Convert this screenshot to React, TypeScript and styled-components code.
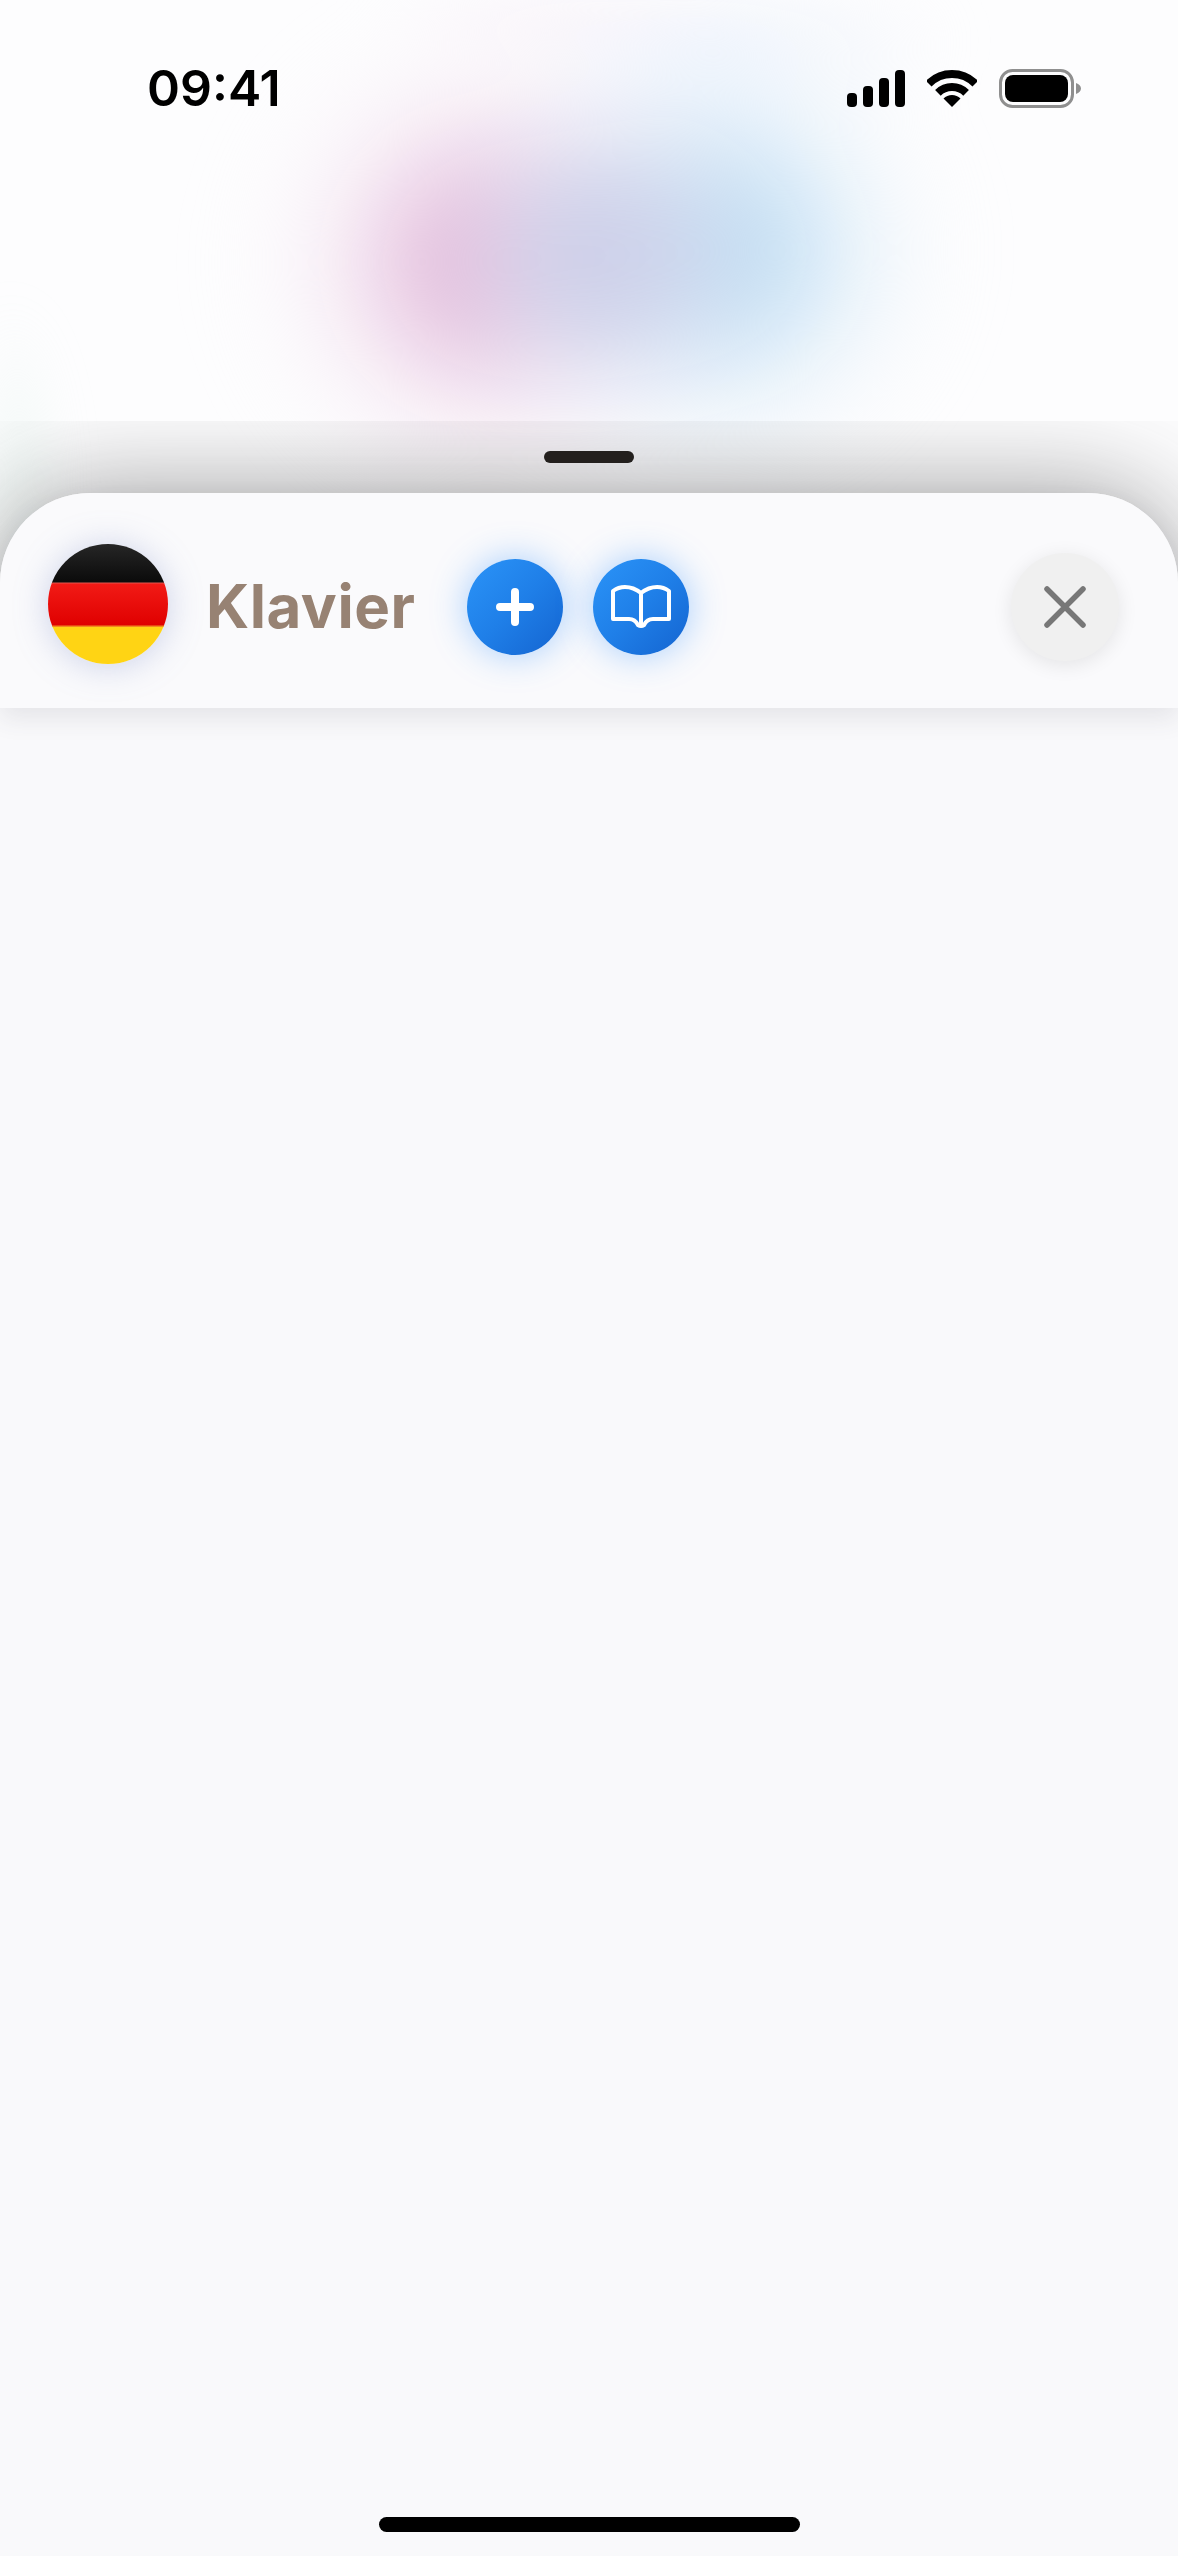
import React from "react";
import styled, { createGlobalStyle } from "styled-components";

const GlobalStyle = createGlobalStyle`
  html, body {
    margin: 0;
    padding: 0;
    background: #f9f9fb;
  }
`;

const Page = styled.div`
  position: relative;
  display: flex;
  flex-direction: column;
  width: 1178px;
  height: 2556px;
  overflow: hidden;
  background: #fdfdfe;
  font-family: Inter, "Liberation Sans", sans-serif;
`;

// blurred colour blobs of whatever sits behind the sheet
const Backdrop = styled.div`
  position: absolute;
  inset: 0 0 auto 0;
  height: 760px;
  filter: blur(24px);
  background:
    radial-gradient(circle 190px at 600px 256px, rgba(204, 206, 232, 0.95), rgba(208, 210, 234, 0.72) 35%, rgba(222, 222, 240, 0.32) 65%, rgba(240, 238, 248, 0) 100%),
    radial-gradient(circle 270px at 716px 250px, rgba(186, 218, 241, 0.96), rgba(190, 220, 242, 0.86) 20%, rgba(200, 226, 245, 0.6) 40%, rgba(215, 234, 248, 0.3) 60%, rgba(228, 240, 250, 0.1) 80%, rgba(235, 243, 252, 0) 100%),
    radial-gradient(circle 280px at 486px 262px, rgba(226, 184, 217, 1), rgba(228, 190, 220, 0.92) 20%, rgba(234, 204, 228, 0.64) 40%, rgba(242, 222, 238, 0.32) 60%, rgba(248, 236, 245, 0.12) 80%, rgba(250, 240, 248, 0) 100%),
    radial-gradient(ellipse 200px 60px at 560px 0, rgba(248, 238, 248, 0.7), rgba(248, 238, 248, 0)),
    radial-gradient(ellipse 240px 120px at 720px 40px, rgba(238, 243, 252, 0.7), rgba(238, 243, 252, 0)),
    radial-gradient(ellipse 60px 180px at 0 480px, rgba(218, 240, 230, 0.5), rgba(218, 240, 230, 0));
`;

const StatusBar = styled.div`
  position: relative;
  display: flex;
  align-items: center;
  justify-content: space-between;
  height: 421px;
  box-sizing: border-box;
  padding: 63px 97px 308px 147px;
`;

const Clock = styled.span`
  font-size: 50px;
  line-height: 50px;
  font-weight: 600;
  color: #000;
`;

const StatusIcons = styled.div`
  display: flex;
  align-items: center;
  gap: 22px;
`;

const SheetArea = styled.div`
  position: relative;
  flex: 1;
  display: flex;
  flex-direction: column;
  align-items: center;
  overflow: hidden;
  padding-top: 30px;
`;

const Grabber = styled.div`
  width: 90px;
  height: 12px;
  margin-bottom: 30px;
  border-radius: 6px;
  background: #231f1d;
  z-index: 1;
`;

const Sheet = styled.div`
  position: relative;
  flex: 1;
  align-self: stretch;
  display: flex;
  flex-direction: column;
  border-radius: 90px 90px 0 0;
  background: #f9f9fb;
  box-shadow: 0 0 110px rgba(40, 40, 40, 0.46);
`;

const Header = styled.header`
  display: flex;
  align-items: center;
  height: 215px;
  box-sizing: border-box;
  padding: 7px 59px 0 48px;
  border-radius: 90px 90px 0 0;
  background: #fafafc;
  box-shadow: 0 10px 26px rgba(60, 65, 85, 0.11);
`;

const FlagBadge = styled.svg`
  display: block;
  flex: none;
  width: 120px;
  height: 120px;
  border-radius: 50%;
  box-shadow: 0 2px 34px rgba(130, 145, 200, 0.38);
`;

const Title = styled.h1`
  margin: 4px 51px 0 38px;
  font-size: 60px;
  line-height: 72px;
  font-weight: 700;
  letter-spacing: 0.55px;
  color: #978273;
`;

const ActionButton = styled.button`
  display: flex;
  align-items: center;
  justify-content: center;
  flex: none;
  width: 96px;
  height: 96px;
  margin: 6px 30px 0 0;
  padding: 0;
  border: 0;
  border-radius: 50%;
  background: linear-gradient(135deg, #2b94f8 0%, #1f7fe8 50%, #1464d0 100%);
  box-shadow: 0 0 36px rgba(40, 140, 255, 0.4);
`;

const CloseButton = styled.button`
  display: flex;
  align-items: center;
  justify-content: center;
  flex: none;
  width: 108px;
  height: 108px;
  margin: 6px 0 0 auto;
  padding: 0;
  border: 0;
  border-radius: 50%;
  background: #f0f0f0;
  box-shadow: 0 4px 20px rgba(0, 0, 0, 0.09);
`;

const HomeIndicator = styled.div`
  position: absolute;
  left: 379px;
  bottom: 24px;
  width: 421px;
  height: 15px;
  border-radius: 8px;
  background: #000;
`;

const SignalIcon = () => (
  <svg width="58" height="37" viewBox="0 0 58 37">
    <rect x="0" y="23" width="10" height="14" rx="4" />
    <rect x="16" y="16" width="10" height="21" rx="4" />
    <rect x="32" y="8" width="10" height="29" rx="4" />
    <rect x="48" y="0" width="10" height="37" rx="4" />
  </svg>
);

const WifiIcon = () => (
  <svg width="50" height="37" viewBox="0 0 50 37" fill="none" stroke="#000" strokeWidth="8">
    <path d="M1.7 13.7 A33 33 0 0 1 48.3 13.7" />
    <path d="M10.9 22.9 A20 20 0 0 1 39.1 22.9" />
    <path d="M25 37 L16.5 28.5 A12 12 0 0 1 33.5 28.5 Z" fill="#000" stroke="none" />
  </svg>
);

const BatteryIcon = () => (
  <svg width="82" height="39" viewBox="0 0 82 39">
    <rect x="1.5" y="1.5" width="72" height="36" rx="12" fill="none" stroke="#8f8f8f" strokeWidth="3" />
    <rect x="6" y="6" width="63" height="27" rx="8" />
    <path d="M77 14 C80 15 82 17 82 19.5 C82 22 80 24 77 25 Z" fill="#8f8f8f" />
  </svg>
);

const GermanFlag = () => (
  <FlagBadge viewBox="0 0 120 120">
    <defs>
      <linearGradient id="flagBlack" x1="0" y1="0" x2="0" y2="1">
        <stop offset="0" stopColor="#262626" />
        <stop offset="1" stopColor="#0a0a0a" />
      </linearGradient>
      <linearGradient id="flagRed" x1="0" y1="0" x2="0" y2="1">
        <stop offset="0" stopColor="#f21b16" />
        <stop offset="1" stopColor="#df0000" />
      </linearGradient>
    </defs>
    <rect width="120" height="39" fill="url(#flagBlack)" />
    <rect y="39" width="120" height="43" fill="url(#flagRed)" />
    <rect y="38.5" width="120" height="1" fill="#e2564f" />
    <rect y="82" width="120" height="38" fill="#ffd414" />
    <rect y="81.5" width="120" height="1.5" fill="#f28a20" />
  </FlagBadge>
);

const PlusIcon = () => (
  <svg width="38" height="38" viewBox="0 0 38 38" fill="none" stroke="#fff" strokeWidth="8" strokeLinecap="round">
    <path d="M19 4 V34 M4 19 H34" />
  </svg>
);

const BookIcon = () => (
  <svg width="62" height="44" viewBox="0 0 62 44" fill="none" stroke="#fff" strokeWidth="4" strokeLinejoin="round" strokeLinecap="round">
    <path d="M31 8 C26 4 20 2 15 2 C11 2 7 3 3 6 V34 H19 C23 34 26 36 28 40 Q31 42 34 40 C36 36 39 34 43 34 H59 V6 C55 3 51 2 47 2 C42 2 36 4 31 8 Z M31 8 V40" />
  </svg>
);

const CloseIcon = () => (
  <svg width="42" height="42" viewBox="0 0 42 42" fill="none" stroke="#777" strokeWidth="5.5" strokeLinecap="round">
    <path d="M3 3 L39 39 M39 3 L3 39" />
  </svg>
);

export default function App() {
  return (
    <Page>
      <GlobalStyle />
      <Backdrop />
      <StatusBar>
        <Clock>09:41</Clock>
        <StatusIcons>
          <SignalIcon />
          <WifiIcon />
          <BatteryIcon />
        </StatusIcons>
      </StatusBar>
      <SheetArea>
        <Grabber />
        <Sheet>
          <Header>
            <GermanFlag />
            <Title>Klavier</Title>
            <ActionButton aria-label="Add">
              <PlusIcon />
            </ActionButton>
            <ActionButton aria-label="Dictionary">
              <BookIcon />
            </ActionButton>
            <CloseButton aria-label="Close">
              <CloseIcon />
            </CloseButton>
          </Header>
        </Sheet>
      </SheetArea>
      <HomeIndicator />
    </Page>
  );
}
